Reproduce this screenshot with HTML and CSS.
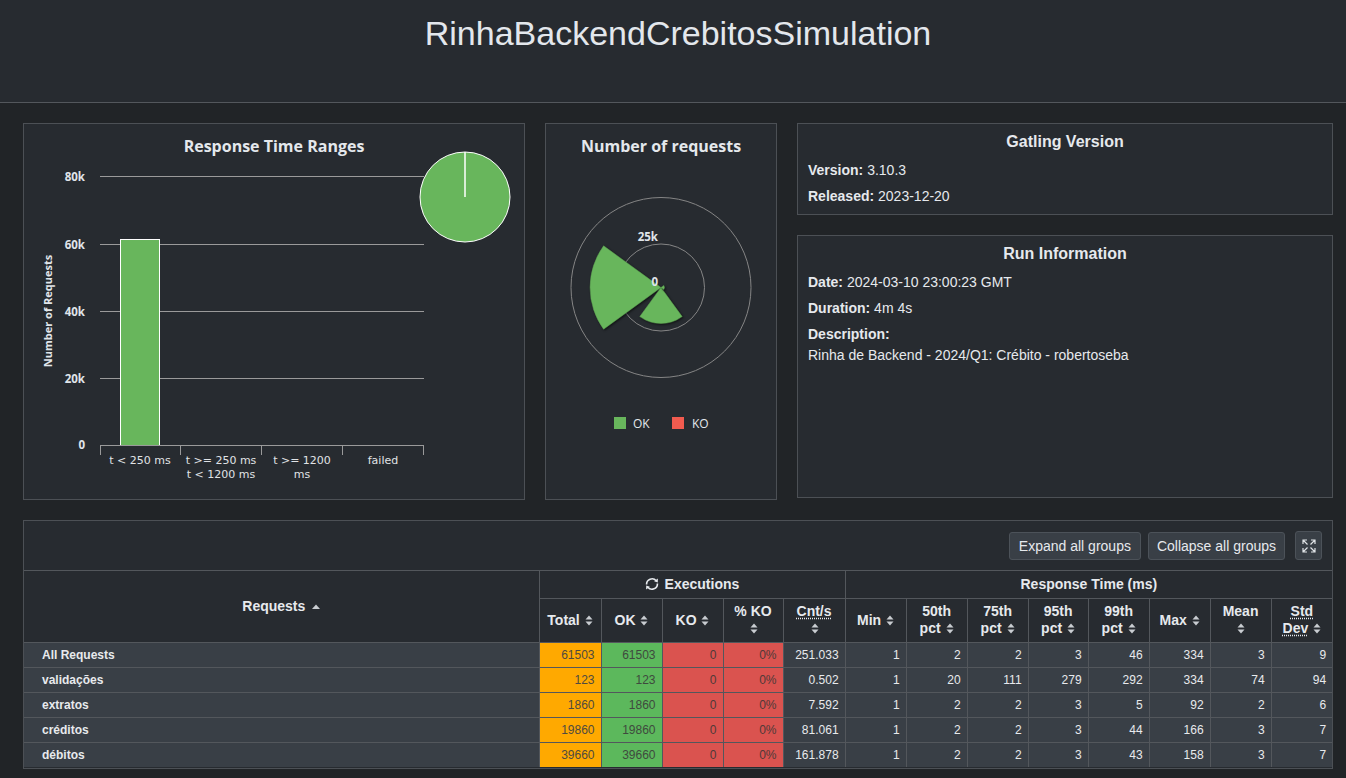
FILE: index.html
```html
<!DOCTYPE html>
<html lang="pt">
<head>
<meta charset="utf-8">
<title>RinhaBackendCrebitosSimulation</title>
<link rel="stylesheet" href="styles.css">
</head>
<body>
<header class="page-header">
  <h1 class="page-title">RinhaBackendCrebitosSimulation</h1>
</header>

<main class="main">
  <div class="charts">
    <section class="card card-ranges">
      <svg class="chart" width="500" height="374" viewBox="0 0 500 374">
        <text class="c-title" x="250" y="27.5" text-anchor="middle">Response Time Ranges</text>
        <path class="grid" d="M76 52.5H400M76 120.5H400M76 187.5H400M76 254.5H400"/>
        <text class="y-lab" x="61" y="56.5" text-anchor="end">80k</text>
        <text class="y-lab" x="61" y="124.5" text-anchor="end">60k</text>
        <text class="y-lab" x="61" y="191.5" text-anchor="end">40k</text>
        <text class="y-lab" x="61" y="258.5" text-anchor="end">20k</text>
        <text class="y-lab" x="61" y="325" text-anchor="end">0</text>
        <text class="y-title" transform="translate(28 187) rotate(-90)" text-anchor="middle">Number of Requests</text>
        <rect class="bar" x="96.5" y="115.5" width="39" height="206"/>
        <path class="axis" d="M76 321.5H400M76.5 321V331M156.5 321V331M237.5 321V331M318.5 321V331M399.5 321V331"/>
        <text class="x-lab" x="116" y="340" text-anchor="middle">t &lt; 250 ms</text>
        <text class="x-lab" x="197" y="340" text-anchor="middle">t &gt;= 250 ms</text>
        <text class="x-lab" x="197" y="354" text-anchor="middle">t &lt; 1200 ms</text>
        <text class="x-lab" x="278" y="340" text-anchor="middle">t &gt;= 1200</text>
        <text class="x-lab" x="278" y="354" text-anchor="middle">ms</text>
        <text class="x-lab" x="359" y="340" text-anchor="middle">failed</text>
        <circle class="pie" cx="441" cy="73" r="45"/>
        <line class="pie-cut" x1="441" y1="73" x2="441" y2="28"/>
      </svg>
    </section>

    <section class="card card-requests">
      <svg class="chart" width="230" height="374" viewBox="0 0 230 374">
        <text class="c-title" x="115" y="27.5" text-anchor="middle">Number of requests</text>
        <circle class="ring" cx="115" cy="163.5" r="90"/>
        <circle class="ring" cx="115" cy="163.5" r="43.5"/>
        <g class="sectors">
          <path d="M115 163.5L57.6 205.2A71 71 0 0 1 57.6 121.8Z"/>
          <path d="M115 163.5L136.2 192.6A36 36 0 0 1 93.8 192.6Z"/>
          <path d="M115 163.5L117.8 161.5A3.4 3.4 0 0 1 117.8 165.5Z"/>
        </g>
        <text class="y-lab" x="112" y="117" text-anchor="end">25k</text>
        <text class="y-lab" x="112" y="162" text-anchor="end">0</text>
        <rect x="68" y="293" width="12" height="12" fill="#68b65c"/>
        <text class="legend" x="87" y="303.5">OK</text>
        <rect x="126" y="293" width="12" height="12" fill="#f15b4f"/>
        <text class="legend" x="146" y="303.5">KO</text>
      </svg>
    </section>

    <div class="info-col">
      <section class="card info-card">
        <h2 class="info-title">Gatling Version</h2>
        <div class="info-row"><b>Version:</b> 3.10.3</div>
        <div class="info-row"><b>Released:</b> 2023-12-20</div>
      </section>
      <section class="card info-card card-run">
        <h2 class="info-title">Run Information</h2>
        <div class="info-row"><b>Date:</b> 2024-03-10 23:00:23 GMT</div>
        <div class="info-row"><b>Duration:</b> 4m 4s</div>
        <div class="info-row"><b>Description:</b>
          <div class="desc">Rinha de Backend - 2024/Q1: Crébito - robertoseba</div>
        </div>
      </section>
    </div>
  </div>

  <section class="card table-card">
    <div class="toolbar">
      <button class="btn">Expand all groups</button>
      <button class="btn btn-collapse">Collapse all groups</button>
      <button class="btn btn-icon" aria-label="Fullscreen">
        <svg width="14" height="14" viewBox="0 0 14 14"><path d="M1 5V1H5M1 1L5.5 5.5M9 1H13V5M13 1L8.5 5.5M1 9V13H5M1 13L5.5 8.5M13 9V13H9M13 13L8.5 8.5"/></svg>
      </button>
    </div>
    <table class="stats">
      <colgroup>
        <col class="w-name"><col class="w62"><col class="w61"><col class="w61"><col class="w60"><col class="w62"><col class="w61"><col class="w61"><col class="w61"><col class="w60"><col class="w61"><col class="w61"><col class="w61"><col class="w61">
      </colgroup>
      <thead>
        <tr class="hrow1">
          <th rowspan="2" class="th-name">Requests <svg class="sort-up" width="8" height="5" viewBox="0 0 8 5"><path d="M0 5L4 0.5L8 5Z"/></svg></th>
          <th colspan="5"><svg class="refresh" width="14" height="14" viewBox="0 0 14 14"><path class="arc" d="M1.6 7.5A5.4 5.4 0 0 1 11.2 3.8"/><path class="arc" d="M12.4 6.5A5.4 5.4 0 0 1 2.8 10.2"/><path class="head" d="M12.9 1.6L12.8 5.6L9.1 4.3Z"/><path class="head" d="M1.1 12.4L1.2 8.4L4.9 9.7Z"/></svg> Executions</th>
          <th colspan="8">Response Time (ms)</th>
        </tr>
        <tr class="hrow2">
          <th>Total <svg class="sort" width="8" height="11" viewBox="0 0 8 11"><path d="M0.5 4.5L4 0.5L7.5 4.5ZM0.5 6.5L4 10.5L7.5 6.5Z"/></svg></th>
          <th>OK <svg class="sort" width="8" height="11" viewBox="0 0 8 11"><path d="M0.5 4.5L4 0.5L7.5 4.5ZM0.5 6.5L4 10.5L7.5 6.5Z"/></svg></th>
          <th>KO <svg class="sort" width="8" height="11" viewBox="0 0 8 11"><path d="M0.5 4.5L4 0.5L7.5 4.5ZM0.5 6.5L4 10.5L7.5 6.5Z"/></svg></th>
          <th>% KO<br><svg class="sort" width="8" height="11" viewBox="0 0 8 11"><path d="M0.5 4.5L4 0.5L7.5 4.5ZM0.5 6.5L4 10.5L7.5 6.5Z"/></svg></th>
          <th><abbr class="abbr">Cnt/s</abbr><br><svg class="sort" width="8" height="11" viewBox="0 0 8 11"><path d="M0.5 4.5L4 0.5L7.5 4.5ZM0.5 6.5L4 10.5L7.5 6.5Z"/></svg></th>
          <th>Min <svg class="sort" width="8" height="11" viewBox="0 0 8 11"><path d="M0.5 4.5L4 0.5L7.5 4.5ZM0.5 6.5L4 10.5L7.5 6.5Z"/></svg></th>
          <th>50th<br>pct <svg class="sort" width="8" height="11" viewBox="0 0 8 11"><path d="M0.5 4.5L4 0.5L7.5 4.5ZM0.5 6.5L4 10.5L7.5 6.5Z"/></svg></th>
          <th>75th<br>pct <svg class="sort" width="8" height="11" viewBox="0 0 8 11"><path d="M0.5 4.5L4 0.5L7.5 4.5ZM0.5 6.5L4 10.5L7.5 6.5Z"/></svg></th>
          <th>95th<br>pct <svg class="sort" width="8" height="11" viewBox="0 0 8 11"><path d="M0.5 4.5L4 0.5L7.5 4.5ZM0.5 6.5L4 10.5L7.5 6.5Z"/></svg></th>
          <th>99th<br>pct <svg class="sort" width="8" height="11" viewBox="0 0 8 11"><path d="M0.5 4.5L4 0.5L7.5 4.5ZM0.5 6.5L4 10.5L7.5 6.5Z"/></svg></th>
          <th>Max <svg class="sort" width="8" height="11" viewBox="0 0 8 11"><path d="M0.5 4.5L4 0.5L7.5 4.5ZM0.5 6.5L4 10.5L7.5 6.5Z"/></svg></th>
          <th>Mean<br><svg class="sort" width="8" height="11" viewBox="0 0 8 11"><path d="M0.5 4.5L4 0.5L7.5 4.5ZM0.5 6.5L4 10.5L7.5 6.5Z"/></svg></th>
          <th><abbr class="abbr">Std<br>Dev</abbr> <svg class="sort" width="8" height="11" viewBox="0 0 8 11"><path d="M0.5 4.5L4 0.5L7.5 4.5ZM0.5 6.5L4 10.5L7.5 6.5Z"/></svg></th>
        </tr>
      </thead>
      <tbody>
        <tr>
          <td class="name">All Requests</td><td class="total">61503</td><td class="ok">61503</td><td class="ko">0</td><td class="ko">0%</td><td>251.033</td><td>1</td><td>2</td><td>2</td><td>3</td><td>46</td><td>334</td><td>3</td><td>9</td>
        </tr>
        <tr>
          <td class="name">validações</td><td class="total">123</td><td class="ok">123</td><td class="ko">0</td><td class="ko">0%</td><td>0.502</td><td>1</td><td>20</td><td>111</td><td>279</td><td>292</td><td>334</td><td>74</td><td>94</td>
        </tr>
        <tr>
          <td class="name">extratos</td><td class="total">1860</td><td class="ok">1860</td><td class="ko">0</td><td class="ko">0%</td><td>7.592</td><td>1</td><td>2</td><td>2</td><td>3</td><td>5</td><td>92</td><td>2</td><td>6</td>
        </tr>
        <tr>
          <td class="name">créditos</td><td class="total">19860</td><td class="ok">19860</td><td class="ko">0</td><td class="ko">0%</td><td>81.061</td><td>1</td><td>2</td><td>2</td><td>3</td><td>44</td><td>166</td><td>3</td><td>7</td>
        </tr>
        <tr>
          <td class="name">débitos</td><td class="total">39660</td><td class="ok">39660</td><td class="ko">0</td><td class="ko">0%</td><td>161.878</td><td>1</td><td>2</td><td>2</td><td>3</td><td>43</td><td>158</td><td>3</td><td>7</td>
        </tr>
      </tbody>
    </table>
  </section>
</main>
</body>
</html>
```

FILE: styles.css
```css
* { box-sizing: border-box; }

html, body { margin: 0; padding: 0; }

body {
  background: #212427;
  color: #e6e9ed;
  font-family: "Liberation Sans", Arial, sans-serif;
  width: 1346px;
  height: 778px;
  overflow: hidden;
}

.page-header {
  background: #272b30;
  height: 103px;
  border-bottom: 1px solid #53575c;
}

.page-title {
  margin: 0;
  padding-top: 14px;
  padding-left: 10px;
  text-align: center;
  font-weight: normal;
  font-size: 34px;
  line-height: 39px;
  color: #e3e7ec;
}

.main {
  padding: 20px 0 0 23px;
  width: 1333px;
  display: flex;
  flex-direction: column;
  gap: 20px;
}

.charts {
  display: flex;
  gap: 20px;
  height: 377px;
}

.card {
  background: #272b30;
  border: 1px solid #4c5055;
}

.card-ranges { width: 502px; }
.card-requests { width: 232px; }

.chart { display: block; }

.c-title {
  font-family: "Open Sans", "Noto Sans", sans-serif;
  font-weight: bold;
  font-size: 16px;
  fill: #e4e8ec;
}

.grid { stroke: #9a9a9a; stroke-width: 1; fill: none; }
.axis { stroke: #9a9a9a; stroke-width: 1; fill: none; }

.y-lab {
  font-family: "Open Sans", "Noto Sans", sans-serif;
  font-weight: bold;
  font-size: 11.5px;
  fill: #e0e5ea;
}

.y-title {
  font-family: "Open Sans", "Noto Sans", sans-serif;
  font-weight: bold;
  font-size: 11px;
  fill: #e0e5ea;
}

.x-lab {
  font-family: "DejaVu Sans", Verdana, sans-serif;
  font-size: 11px;
  fill: #e0e3e6;
}

.bar { fill: #68b65c; stroke: #ffffff; stroke-width: 1; }

.pie { fill: #68b65c; stroke: #ffffff; stroke-width: 1; }
.pie-cut { stroke: #ffffff; stroke-width: 1.5; }

.ring { fill: none; stroke: #858585; stroke-width: 1; }

.sectors path {
  fill: #68b65c;
  stroke: #5fa553;
  stroke-width: 0.5;
  filter: drop-shadow(1px 1px 1px rgba(0, 0, 0, 0.6));
}

.legend {
  font-family: "Open Sans", "Noto Sans", sans-serif;
  font-size: 12px;
  fill: #e4e8ec;
}

.info-col {
  width: 536px;
  display: flex;
  flex-direction: column;
  gap: 20px;
}

.info-card { padding: 8px 10px; }

.card-run { height: 263px; }

.info-title {
  margin: 0 0 8px;
  font-size: 16px;
  line-height: 20px;
  font-weight: bold;
  text-align: center;
  color: #e6e9ed;
}

.info-row {
  font-size: 14px;
  line-height: 20px;
  color: #e6e9ed;
}

.info-row + .info-row { margin-top: 6px; }

.desc { margin-top: 1px; }

.table-card {
  height: 249px;
  overflow: hidden;
}

.toolbar {
  height: 50px;
  display: flex;
  justify-content: flex-end;
  align-items: center;
  padding-right: 10px;
  border-bottom: 1px solid #53575c;
}

.btn {
  height: 28px;
  padding: 0 9px;
  font-family: "Liberation Sans", Arial, sans-serif;
  font-size: 14px;
  color: #e6e9ed;
  background: #393f46;
  border: 1px solid #4c5259;
  border-radius: 3px;
}

.btn-collapse { margin-left: 7px; padding: 0 8px; }

.btn-icon {
  margin-left: 10px;
  width: 27px;
  height: 29px;
  padding: 0;
  display: flex;
  align-items: center;
  justify-content: center;
}

.btn-icon svg path {
  fill: none;
  stroke: #e0e3e6;
  stroke-width: 1.2;
}

.stats {
  width: 100%;
  border-collapse: collapse;
  border-style: hidden;
  table-layout: fixed;
}

.w-name { width: 515px; }
.w62 { width: 62px; }
.w61 { width: 61px; }
.w60 { width: 60px; }

.stats th,
.stats td {
  border: 1px solid #53575c;
}

.stats th {
  font-size: 14px;
  font-weight: bold;
  color: #e6e9ed;
  text-align: center;
  line-height: 17px;
  padding: 0 2px;
}

.hrow1 th { height: 27px; }
.hrow2 th { height: 44px; }

.sort, .sort-up {
  fill: #c9cdd1;
  vertical-align: -1px;
  margin-left: 1px;
}

.sort-up { vertical-align: 2px; margin-left: 3px; }

.refresh {
  vertical-align: -2px;
  margin-right: 2px;
}

.refresh .arc { fill: none; stroke: #e6e9ed; stroke-width: 1.6; }
.refresh .head { fill: #e6e9ed; }

.abbr {
  text-decoration: underline dotted;
  text-underline-offset: 2px;
}

.stats td {
  height: 25px;
  font-size: 12px;
  text-align: right;
  padding: 0 6px;
  background: #393f46;
  color: #e8eaed;
}

.stats td.name {
  text-align: left;
  font-weight: bold;
  padding-left: 18px;
}

.stats td.total { background: #ffa900; color: #4e4a40; }
.stats td.ok { background: #5cb85c; color: #3f4a3e; }
.stats td.ko { background: #da534f; color: #4e3a39; }
```
